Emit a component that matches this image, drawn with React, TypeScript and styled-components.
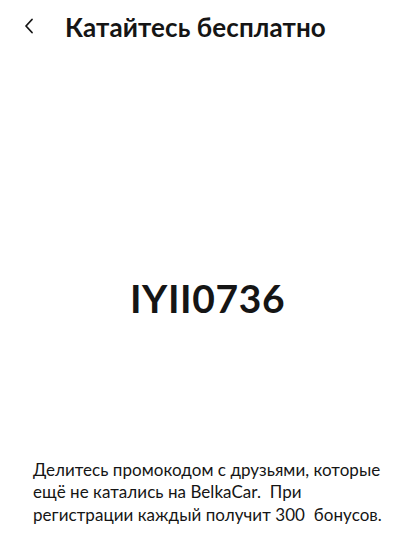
import styled, { createGlobalStyle } from 'styled-components';

const GlobalStyle = createGlobalStyle`
    body {
        margin: 0;
        background: #ffffff;
        font-family: 'Lato', 'Noto Sans', sans-serif;
        color: #151515;
    }
`;

export default function App() {
    return (
        <Page>
            <GlobalStyle />
            <Header>
                <BackButton aria-label="Назад">
                    <svg width="10" height="16" viewBox="0 0 10 16" fill="none">
                        <path d="M8 1.5L2 8l6 6.5" stroke="#151515" strokeWidth="1.8" strokeLinecap="round" strokeLinejoin="round" />
                    </svg>
                </BackButton>
                <Title>Катайтесь бесплатно</Title>
            </Header>
            <CodeArea>
                <PromoCode>IYII0736</PromoCode>
            </CodeArea>
            <Description>
                Делитесь промокодом с друзьями, которые
                <br />
                ещё не катались на BelkaCar.&nbsp; При
                <br />
                регистрации каждый получит 300&nbsp; бонусов.
            </Description>
        </Page>
    );
}

const Page = styled.div`
    height: 540px;
    display: flex;
    flex-direction: column;
    overflow: hidden;
`;
const Header = styled.div`
    display: flex;
    align-items: center;
    height: 54px;
    padding-left: 23px;
`;
const BackButton = styled.button`
    display: flex;
    align-items: center;
    justify-content: center;
    width: 12px;
    height: 20px;
    padding: 0;
    border: none;
    background: none;
    margin-right: 30px;
    margin-top: -2px;
`;
const Title = styled.h1`
    margin: 0;
    font-size: 26px;
    font-weight: 700;
    letter-spacing: 0.1px;
`;
const CodeArea = styled.div`
    flex: 1;
    display: flex;
    align-items: center;
    justify-content: center;
    padding-top: 84px;
`;
const PromoCode = styled.div`
    font-size: 39px;
    font-weight: 700;
    letter-spacing: 0.6px;
`;
const Description = styled.p`
    margin: 0 0 14px 33px;
    font-size: 17px;
    line-height: 22.5px;
    font-weight: 400;
    letter-spacing: 0.05px;
`;
